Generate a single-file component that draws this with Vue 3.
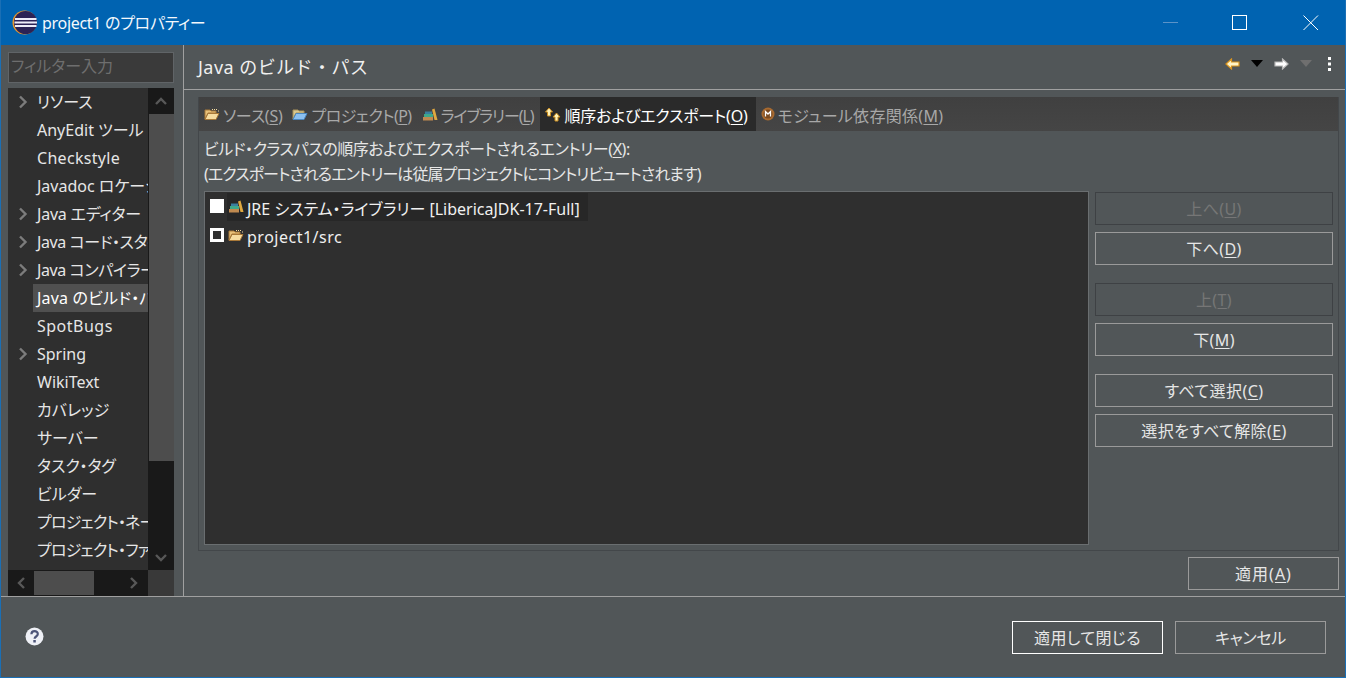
<script setup>
const treeItems = [
  { label: 'リソース', arrow: true },
  { label: 'AnyEdit ツール' },
  { label: 'Checkstyle', ls: 0.3 },
  { label: 'Javadoc ロケーション' },
  { label: 'Java エディター', arrow: true, ls: -0.2 },
  { label: 'Java コード・スタイル', arrow: true, ls: -0.4 },
  { label: 'Java コンパイラー', arrow: true, ls: -0.4 },
  { label: 'Java のビルド・パス', selected: true, ls: 0.2 },
  { label: 'SpotBugs', ls: 0.5 },
  { label: 'Spring', arrow: true },
  { label: 'WikiText' },
  { label: 'カバレッジ' },
  { label: 'サーバー' },
  { label: 'タスク・タグ' },
  { label: 'ビルダー' },
  { label: 'プロジェクト・ネーチャー', ls: -0.8 },
  { label: 'プロジェクト・ファセット', ls: -0.8 },
  { label: 'プロパティー' }
]
const tabs = [
  { label: 'ソース', key: 'S', icon: 'folder', ls: -0.25, pad: 5 },
  { label: 'プロジェクト', key: 'P', icon: 'project', ls: -0.55, pad: 5 },
  { label: 'ライブラリー', key: 'L', icon: 'library', ls: -1.1, pad: 7 },
  { label: '順序およびエクスポート', key: 'O', icon: 'order', active: true, ls: -0.2, pad: 8 },
  { label: 'モジュール依存関係', key: 'M', icon: 'module', ls: 0.3, pad: 5 }
]
const sideGroups = [
  [{ label: '上へ', key: 'U', disabled: true }, { label: '下へ', key: 'D' }],
  [{ label: '上', key: 'T', disabled: true }, { label: '下', key: 'M' }],
  [{ label: 'すべて選択', key: 'C' }, { label: '選択をすべて解除', key: 'E' }]
]
</script>

<template>
  <div class="window">
    <header class="titlebar">
      <svg class="logo" width="25" height="25" viewBox="0 0 25 25">
        <circle cx="12.500" cy="12.500" r="12" fill="#e8982e" />
        <circle cx="13.500" cy="12.500" r="11.500" fill="#2c2255" />
        <path d="M3 9h21.500M2.500 12.500h22.500M3 16h21.500" stroke="#eeecf8" stroke-width="1.800" />
      </svg>
      <span class="title">project1 のプロパティー</span>
      <div class="winbtns">
        <svg width="70" height="45" viewBox="0 0 70 45"><path d="M27 22.500h15" stroke="#5b93c8" /></svg>
        <svg width="70" height="45" viewBox="0 0 70 45"><rect x="26.500" y="15.500" width="14" height="14" fill="none" stroke="#fff" /></svg>
        <svg width="70" height="45" viewBox="0 0 70 45"><path d="M27.500 15.500l14.500 14.500M42 15.500l-14.500 14.500" stroke="#fff" /></svg>
      </div>
    </header>

    <div class="body">
      <aside class="side">
        <div class="filter">フィルター入力</div>
        <div class="tree">
          <div class="tree-main">
            <ul class="tree-list">
              <li v-for="item in treeItems" :key="item.label" class="tree-row">
                <svg v-if="item.arrow" class="twisty" width="10" height="14" viewBox="0 0 10 14">
                  <path d="M2 1.500l5.500 5.500-5.500 5.500" fill="none" stroke="#7c7c7c" stroke-width="2.400" />
                </svg>
                <span class="tree-label" :class="{ selected: item.selected }" :style="{ letterSpacing: (item.ls || 0) + 'px' }">{{ item.label }}</span>
              </li>
            </ul>
            <div class="vscroll">
              <div class="sb-btn">
                <svg width="12" height="8" viewBox="0 0 12 8"><path d="M1 7l5-5 5 5" fill="none" stroke="#585858" stroke-width="2.400" /></svg>
              </div>
              <div class="vthumb"></div>
              <div class="vtrack">
                <svg width="12" height="8" viewBox="0 0 12 8"><path d="M1 1l5 5 5-5" fill="none" stroke="#585858" stroke-width="2.400" /></svg>
              </div>
            </div>
          </div>
          <div class="hscroll">
            <div class="hbar">
              <svg class="h-left" width="8" height="12" viewBox="0 0 8 12"><path d="M7 1L2 6l5 5" fill="none" stroke="#585858" stroke-width="2.400" /></svg>
              <div class="hthumb"></div>
              <svg class="h-right" width="8" height="12" viewBox="0 0 8 12"><path d="M1 1l5 5-5 5" fill="none" stroke="#585858" stroke-width="2.400" /></svg>
            </div>
            <div class="corner"></div>
          </div>
        </div>
      </aside>

      <main class="page">
        <div class="page-head">
          <h1 class="page-title">Java のビルド・パス</h1>
          <div class="page-tools">
            <svg width="15" height="12" viewBox="0 0 15 12"><path d="M1 6l5.500-5v3h7.500v4H6.500v3z" fill="#fff4c8" stroke="#d8931e" stroke-width="1.200" /></svg>
            <svg class="tool-drop" width="12" height="7" viewBox="0 0 12 7"><path d="M0 0h12L6 7z" fill="#000" /></svg>
            <svg class="tool-fwd" width="15" height="12" viewBox="0 0 15 12"><path d="M14 6L8.500 1v3H1v4h7.500v3z" fill="#fff" stroke="#b8b8b8" stroke-width="1.200" /></svg>
            <svg class="tool-drop" width="12" height="7" viewBox="0 0 12 7"><path d="M0 0h12L6 7z" fill="#6f6f6f" /></svg>
            <svg class="tool-menu" width="4" height="14" viewBox="0 0 4 14"><path d="M0 0h3v3H0zM0 5.500h3v3H0zM0 11h3v3H0z" fill="#fff" /></svg>
          </div>
        </div>

        <div class="page-content">
          <div class="tabfolder">
            <div class="tabs">
              <div v-for="tab in tabs" :key="tab.label" class="tab" :class="{ active: tab.active }" :style="{ paddingRight: tab.pad + 'px' }">
                <svg v-if="tab.icon === 'folder'" width="16" height="13" viewBox="0 0 16 13">
                  <path d="M1 2h5l1 1h5v2H4L1 11z" fill="#e8c078" stroke="#a87838" />
                  <path d="M1 11.500l3-6h11l-3 6z" fill="#f6dca0" stroke="#a87838" />
                  <path d="M8 1.500h1M10 1.500h1M12 1.500h1M14 3h1" stroke="#f6dca0" />
                </svg>
                <svg v-else-if="tab.icon === 'project'" width="16" height="13" viewBox="0 0 16 13">
                  <path d="M1 2h5l1 1h5v2H4L1 11z" fill="#d8c890" stroke="#a89058" />
                  <path d="M1 11.500l3-6h11l-3 6z" fill="#8cc0f0" stroke="#4c88c0" />
                </svg>
                <svg v-else-if="tab.icon === 'library'" width="16" height="13" viewBox="0 0 16 13">
                  <path d="M1 9h10v3.500H1z" fill="#c08a50" />
                  <path d="M2 6h9v3H2z" fill="#3fa88a" />
                  <path d="M3 3.500h7V6H3z" fill="#3a7fa0" />
                  <path d="M10 1.500l2.500-1 3 11.500h-3z" fill="#e0a840" />
                </svg>
                <svg v-else-if="tab.icon === 'order'" width="16" height="15" viewBox="0 0 16 15">
                  <path d="M0.500 5l3.500-4 3.500 4H5.500v4h-3V5z" fill="#fff2b8" stroke="#c88c20" />
                  <path d="M8 10l3.500-4 3.500 4h-2v4h-3v-4z" fill="#fff2b8" stroke="#c88c20" />
                </svg>
                <svg v-else width="14" height="14" viewBox="0 0 14 14">
                  <circle cx="7" cy="7" r="6.500" fill="#a86a30" />
                  <circle cx="7" cy="7" r="4.500" fill="#7a4a20" />
                  <path d="M4.500 9.500v-5l2.500 2.500 2.500-2.500v5" fill="none" stroke="#fff" stroke-width="1.300" />
                </svg>
                <span class="tab-text" :style="{ letterSpacing: tab.ls + 'px' }">{{ tab.label }}(<u>{{ tab.key }}</u>)</span>
              </div>
            </div>

            <div class="tab-body">
              <p class="desc line1">ビルド・クラスパスの順序およびエクスポートされるエントリー(<u>X</u>):</p>
              <p class="desc line2">(エクスポートされるエントリーは従属プロジェクトにコントリビュートされます)</p>

              <div class="order-area">
                <div class="entries">
                  <div class="entry first">
                    <span class="check full"></span>
                    <div class="entry-sel">
                      <svg width="16" height="13" viewBox="0 0 16 13">
                        <path d="M1 9h10v3.500H1z" fill="#c08a50" />
                        <path d="M2 6h9v3H2z" fill="#3fa88a" />
                        <path d="M3 3.500h7V6H3z" fill="#3a7fa0" />
                        <path d="M10 1.500l2.500-1 3 11.500h-3z" fill="#e0a840" />
                      </svg>
                      <span class="entry-text">JRE システム・ライブラリー [LibericaJDK-17-Full]</span>
                    </div>
                  </div>
                  <div class="entry">
                    <span class="check"></span>
                    <div class="entry-sel plain">
                      <svg width="16" height="13" viewBox="0 0 16 13">
                        <path d="M1 2h5l1 1h5v2H4L1 11z" fill="#e8c078" stroke="#a87838" />
                        <path d="M1 11.500l3-6h11l-3 6z" fill="#f6dca0" stroke="#a87838" />
                        <path d="M8 1.500h1M10 1.500h1M12 1.500h1M14 3h1" stroke="#f6dca0" />
                      </svg>
                      <span class="entry-text wider">project1/src</span>
                    </div>
                  </div>
                </div>

                <div class="side-buttons">
                  <div v-for="(group, i) in sideGroups" :key="i" class="btn-group">
                    <button v-for="b in group" :key="b.label" class="btn" :class="{ disabled: b.disabled }">
                      {{ b.label }}(<u>{{ b.key }}</u>)
                    </button>
                  </div>
                </div>
              </div>
            </div>
          </div>
          <div class="apply-row">
            <button class="btn wide apply">適用(<u>A</u>)</button>
          </div>
        </div>
      </main>
    </div>

    <footer class="footer">
      <svg class="help" width="19" height="19" viewBox="0 0 19 19">
        <circle cx="9.500" cy="9.500" r="9" fill="#eef0f6" />
        <path d="M6.400 7.300c0-4.200 6.400-4.200 6.400-.3 0 2.600-3.200 2.400-3.200 4.700" fill="none" stroke="#4c5478" stroke-width="2.200" />
        <rect x="8.300" y="13" width="2.500" height="2.500" fill="#4c5478" />
      </svg>
      <div class="footer-btns">
        <button class="btn wide default">適用して閉じる</button>
        <button class="btn wide cancel">キャンセル</button>
      </div>
    </footer>
  </div>
</template>

<style>
html, body {
  margin: 0;
  background: #515658;
  overflow: hidden;
}
</style>

<style scoped>
.window {
  width: 1346px;
  height: 678px;
  box-sizing: border-box;
  display: flex;
  flex-direction: column;
  background: #515658;
  border-left: 1px solid #1a6fb5;
  border-right: 1px solid #1a6fb5;
  border-bottom: 1px solid #1a6fb5;
  color: #e6e6e6;
  font-family: "Noto Sans", "Noto Sans CJK JP", sans-serif;
  font-size: 16px;
  font-feature-settings: "palt";
  overflow: hidden;
}
u {
  text-underline-offset: 2px;
}
.titlebar {
  height: 45px;
  flex: none;
  margin: 0 -1px;
  display: flex;
  align-items: center;
  padding-left: 12px;
  background: #0063b1;
  color: #fff;
}
.logo {
  flex: none;
}
.title {
  margin: -2px 0 0 5px;
  font-size: 16px;
  letter-spacing: -0.3px;
  color: #f4f8fc;
}
.winbtns {
  margin-left: auto;
  display: flex;
}
.winbtns svg {
  display: block;
}
.body {
  height: 551px;
  flex: none;
  display: flex;
  border-bottom: 1px solid #a0a0a0;
  box-sizing: content-box;
}
.side {
  width: 183px;
  flex: none;
  box-sizing: border-box;
  border-right: 1px solid #a0a0a0;
  padding: 7px 9px 0 7px;
  display: flex;
  flex-direction: column;
  gap: 5px;
}
.filter {
  height: 31px;
  flex: none;
  box-sizing: border-box;
  border: 1px solid #606467;
  background: #3a3a3a;
  color: #6e6e6e;
  line-height: 27px;
  padding-left: 2px;
}
.tree {
  flex: 1;
  min-height: 0;
  display: flex;
  flex-direction: column;
}
.tree-main {
  flex: 1;
  min-height: 0;
  display: flex;
  background: #2f2f2f;
}
.tree-list {
  list-style: none;
  margin: 0;
  padding: 0;
  width: 140px;
  overflow: hidden;
}
.tree-row {
  position: relative;
  height: 28px;
  display: flex;
  align-items: center;
  padding-left: 28px;
  white-space: nowrap;
}
.twisty {
  position: absolute;
  left: 10px;
  top: 7px;
}
.tree-label {
  padding: 0 30px 0 1px;
  line-height: 26px;
}
.tree-label.selected {
  background: #505050;
  color: #fff;
  margin-left: -3px;
  padding-left: 4px;
  line-height: 28px;
}
.vscroll {
  width: 26px;
  flex: none;
  display: flex;
  flex-direction: column;
  background: #191919;
}
.sb-btn {
  height: 26px;
  flex: none;
  display: flex;
  align-items: center;
  justify-content: center;
}
.vthumb {
  height: 347px;
  flex: none;
  background: #4d4d4d;
  margin-left: 1px;
}
.vtrack {
  flex: 1;
  display: flex;
  align-items: flex-end;
  justify-content: center;
  padding-bottom: 8px;
}
.hscroll {
  height: 26px;
  flex: none;
  display: flex;
}
.hbar {
  width: 140px;
  flex: none;
  position: relative;
  background: #191919;
  display: flex;
  align-items: center;
}
.h-left {
  margin-left: 9px;
}
.hthumb {
  width: 60px;
  height: 24px;
  background: #4d4d4d;
  margin-left: 9px;
}
.h-right {
  margin-left: 36px;
}
.corner {
  flex: 1;
  background: #393939;
}
.page {
  flex: 1;
  min-width: 0;
  display: flex;
  flex-direction: column;
}
.page-head {
  height: 45px;
  flex: none;
  box-sizing: border-box;
  border-bottom: 1px solid #a0a0a0;
  display: flex;
  align-items: center;
  padding: 0 13px 2px 14px;
}
.page-title {
  margin: 0;
  font-size: 18px;
  font-weight: 400;
  font-feature-settings: normal;
  letter-spacing: 0.45px;
  color: #f0f0f0;
}
.page-tools {
  margin-left: auto;
  display: flex;
  align-items: center;
  margin-top: -5px;
}
.tool-drop {
  margin-left: 11px;
}
.tool-fwd {
  margin-left: 11px;
}
.tool-menu {
  margin-left: 16px;
}
.page-content {
  flex: 1;
  min-height: 0;
  padding: 7px 6px 0 14px;
  display: flex;
  flex-direction: column;
}
.tabfolder {
  height: 454px;
  flex: none;
  box-sizing: border-box;
  border: 1px solid #43474a;
  border-top: none;
  display: flex;
  flex-direction: column;
}
.tabs {
  height: 34px;
  flex: none;
  display: flex;
  background: linear-gradient(#404040, #454545);
}
.tab {
  display: flex;
  align-items: center;
  gap: 3px;
  padding: 0 5px;
  color: #a8a8a8;
  white-space: nowrap;
}
.tab.active {
  background: #2a2a2a;
  color: #fff;
}
.tab-text {
  line-height: 34px;
  padding-top: 4px;
}
.tab-body {
  flex: 1;
  min-height: 0;
  padding: 6px 5px 5px;
  display: flex;
  flex-direction: column;
}
.desc {
  margin: 0;
  height: 25px;
  line-height: 25px;
  color: #e6e6e6;
  white-space: nowrap;
}
.line1 {
  letter-spacing: -0.43px;
}
.line2 {
  letter-spacing: -0.93px;
}
.order-area {
  flex: 1;
  min-height: 0;
  margin-top: 4px;
  display: flex;
  gap: 6px;
}
.entries {
  width: 885px;
  flex: none;
  box-sizing: border-box;
  border: 1px solid #6a6e70;
  background: #2f2f2f;
  padding: 0 5px;
}
.entry {
  height: 29px;
  display: flex;
  align-items: center;
  gap: 3px;
}
.check {
  width: 14px;
  height: 14px;
  box-sizing: border-box;
  flex: none;
  border: 3px solid #fff;
  background: #2f2f2f;
  margin-top: -1px;
}
.check.full {
  background: #fff;
}
.entry-sel {
  display: flex;
  align-items: center;
  gap: 3px;
  height: 28px;
  padding: 0 8px 0 1px;
  background: #272727;
}
.entry-sel.plain {
  background: transparent;
}
.entry-text {
  color: #f0f0f0;
  padding-top: 2px;
}
.entry-text.wider {
  letter-spacing: 0.5px;
}
.side-buttons {
  width: 238px;
  flex: none;
  display: flex;
  flex-direction: column;
  gap: 18px;
  padding-top: 1px;
}
.btn-group {
  display: flex;
  flex-direction: column;
  gap: 7px;
}
.btn {
  height: 33px;
  width: 100%;
  box-sizing: border-box;
  background: transparent;
  border: 1px solid #9a9a9a;
  color: #e6e6e6;
  font: inherit;
  font-feature-settings: "palt";
  letter-spacing: 0.4px;
  padding: 0 0 1px;
}
.btn.disabled {
  border-color: #3e4144;
  color: #767676;
}
.apply-row {
  display: flex;
  justify-content: flex-end;
  margin-top: 6px;
}
.btn.wide {
  width: 151px;
}
.btn.apply {
  letter-spacing: 1px;
}
.btn.cancel {
  letter-spacing: -0.3px;
}
.footer {
  flex: 1;
  min-height: 0;
  display: flex;
  align-items: center;
  padding: 0 19px 0 24px;
}
.help {
  margin-top: -1px;
}
.footer-btns {
  margin-left: auto;
  display: flex;
  gap: 12px;
  margin-top: 1px;
}
.btn.default {
  border-color: #fff;
}
</style>
